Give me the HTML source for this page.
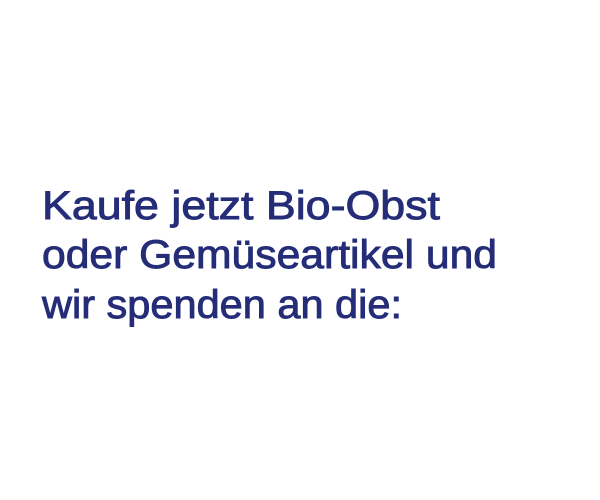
<!DOCTYPE html>
<html><head><style>html,body{margin:0;padding:0;background:#fff;width:600px;height:500px;overflow:hidden}</style></head>
<body>
<svg width="600" height="500" xmlns="http://www.w3.org/2000/svg">
<g fill="#252d78" stroke="#252d78" stroke-width="0.9" font-family="Liberation Sans, sans-serif" font-size="40">
<text x="42" y="219" textLength="398" lengthAdjust="spacingAndGlyphs">Kaufe jetzt Bio-Obst</text>
<text x="42" y="268" textLength="455" lengthAdjust="spacingAndGlyphs">oder Gemüseartikel und</text>
<text x="42" y="318" textLength="360" lengthAdjust="spacingAndGlyphs">wir spenden an die:</text>
</g>
</svg>
</body></html>
